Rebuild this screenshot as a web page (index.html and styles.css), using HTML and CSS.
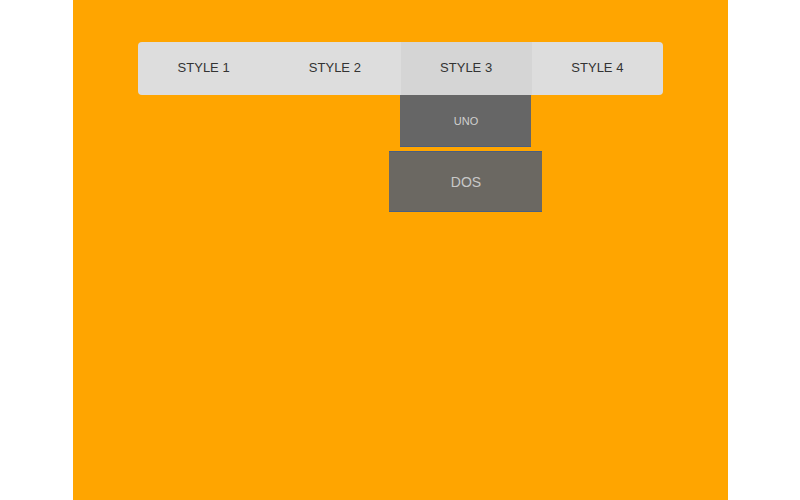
FILE: index.html
```html
<!DOCTYPE html>
<html>
<head>
<meta charset="utf-8">
<link rel="stylesheet" href="styles.css">
</head>
<body>
<div class="page">
  <nav class="nav">
    <div class="item">STYLE 1</div>
    <div class="item">STYLE 2</div>
    <div class="item active">STYLE 3
      <div class="drop">
        <div class="uno">UNO</div>
        <div class="dos">DOS</div>
      </div>
    </div>
    <div class="item">STYLE 4</div>
  </nav>
</div>
</body>
</html>
```
FILE: styles.css
```css
html, body { margin: 0; padding: 0; background: #fff; }
body { font-family: "Liberation Sans", Arial, sans-serif; }
.page {
  width: 655px;
  height: 500px;
  margin-left: 73px;
  background: #ffa500;
  padding-top: 42px;
  box-sizing: border-box;
}
.nav {
  width: 525px;
  height: 53px;
  margin: 0 auto;
  background: #dddddd;
  border-radius: 4px;
  display: flex;
}
.item {
  flex: 1;
  display: flex;
  align-items: center;
  justify-content: center;
  padding-bottom: 2px;
  font-size: 13px;
  color: #333;
  position: relative;
}
.item.active { background: #d5d5d5; }
.drop {
  position: absolute;
  top: 53px;
  left: -1px;
  width: 100%;
}
.uno {
  width: 131px;
  height: 51px;
  box-sizing: content-box;
  padding-left: 2px;
  margin-right: -2px;
  background: #666666;
  border-bottom: 1px solid #4a5f80;
  color: #d0d0d0;
  font-size: 11px;
  display: flex;
  align-items: center;
  justify-content: center;
}
.uno { width: 129px; }
.dos {
  margin-top: 4px;
  margin-left: -11px;
  width: 151px;
  padding-left: 2px;
  height: 59px;
  background: #6b6862;
  border-top: 1px solid #4a5f80;
  border-bottom: 1px solid #4a5f80;
  color: #c8c8c8;
  font-size: 14px;
  display: flex;
  align-items: center;
  justify-content: center;
}
```
